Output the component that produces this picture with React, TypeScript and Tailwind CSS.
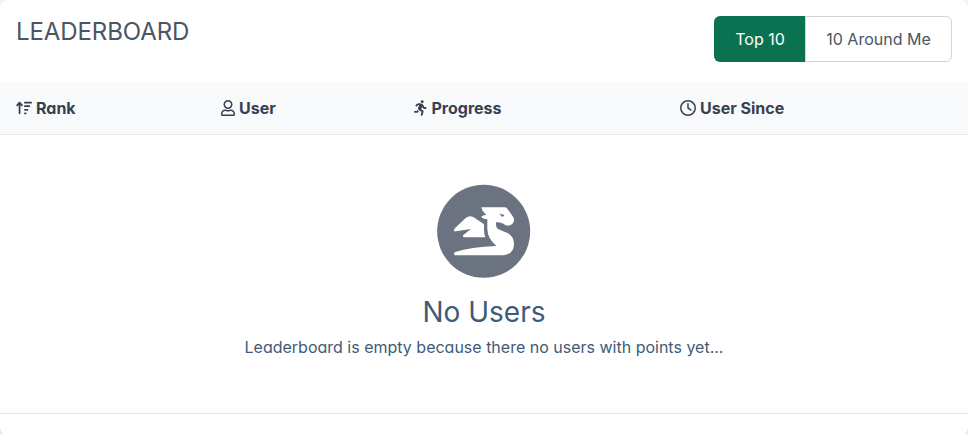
import type { ReactNode } from "react";
import { FaArrowUpWideShort, FaPersonRunning, FaRegClock } from "react-icons/fa6";
import { FaRegUser } from "react-icons/fa";

function HeaderCell({ icon, label, width }: { icon: ReactNode; label: string; width: string }) {
  return (
    <div className={`flex items-center gap-1 ${width}`}>
      {icon}
      <span>{label}</span>
    </div>
  );
}

function Dragon() {
  return (
    <svg className="size-[94px]" viewBox="37 26 282 282" aria-hidden="true">
      <circle cx="177" cy="168" r="139.5" fill="#6b7280" />
      <path
        fill="#fff"
        d="M170 96H240Q245 96 248 100L263 121Q269 128 268 137Q264 149 252 151Q242 151 236 145Q227 141 214 141V149Q214 158 222 162L250 174Q268 184 268 207Q267 238 234 240H91Q88 239 88 235Q88 231 92 230Q138 215 215 212Q189 190 188 162V132Q177 132 169 125Q174 119 185 118Q174 111 170 96Z"
      />
      <path
        fill="#fff"
        d="M88 166Q87 161 92 157L123 128Q135 119 147 126L178 147V164Q178 177 182 186H119Q113 185 115 180L139 161L93 168Q89 169 88 166Z"
      />
      <path fill="#6b7280" d="M225 114L229 117L239 118Q238 124 232 124Q226 122 225 114Z" />
    </svg>
  );
}

export default function App() {
  return (
    <div className="h-[434px] overflow-hidden bg-[#f3f4f6] font-['Inter',sans-serif] text-base [font-feature-settings:'cv11']">
      <main className="flex h-[435px] flex-col overflow-hidden rounded-lg bg-white shadow-md">
        <header className="flex h-[82px] shrink-0 items-start justify-between p-4">
          <h1 className="text-2xl leading-[31px] tracking-[-0.1px] text-[#4b5563]">LEADERBOARD</h1>
          <div className="flex h-[46px]">
            <button className="w-[91px] rounded-l-md bg-[#0a7250] pl-px text-white">Top 10</button>
            <button className="w-[147px] rounded-r-md border border-[#d1d5db] text-[#4b5563]">10 Around Me</button>
          </div>
        </header>
        <div className="flex h-[53px] shrink-0 items-center border-b border-[#e5e7eb] bg-[#f9fafb] pl-4 font-bold text-[#374151]">
          <HeaderCell width="w-[204px]" label="Rank" icon={<FaArrowUpWideShort className="size-4" />} />
          <HeaderCell width="w-[194px]" label="User" icon={<FaRegUser className="ml-px h-4 w-3.5" />} />
          <HeaderCell width="w-[266px]" label="Progress" icon={<FaPersonRunning className="h-4 w-[13.5px]" />} />
          <HeaderCell width="w-[200px]" label="User Since" icon={<FaRegClock className="size-4" />} />
        </div>
        <section className="flex h-[279px] shrink-0 flex-col items-center border-b border-[#e5e7eb] pt-[49px] text-[#405b77]">
          <Dragon />
          <h2 className="mt-4 text-[28px] leading-9">No Users</h2>
          <p className="mt-[5px] leading-6">Leaderboard is empty because there no users with points yet...</p>
        </section>
      </main>
    </div>
  );
}
